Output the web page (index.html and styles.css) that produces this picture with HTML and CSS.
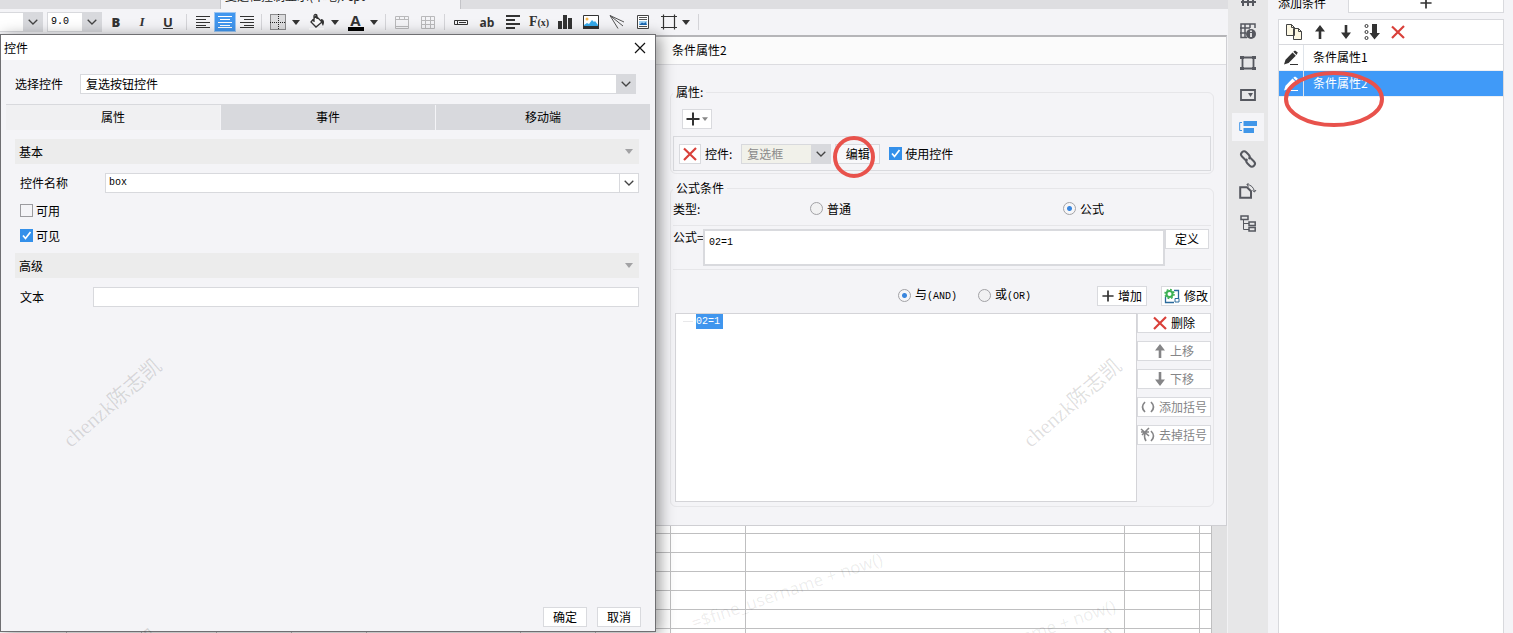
FILE: index.html
```html
<!DOCTYPE html>
<html lang="zh-CN">
<head>
<meta charset="utf-8">
<title>控件</title>
<link rel="stylesheet" href="styles.css">
</head>
<body>
<svg class="defs" aria-hidden="true">
  <symbol id="chev" viewBox="0 0 10 6"><path d="M.7 .7 5 5 9.3 .7" fill="none" stroke="#444" stroke-width="1.3"/></symbol>
  <symbol id="tri" viewBox="0 0 8 5"><path d="M0 0h8L4 5z" fill="currentColor"/></symbol>
  <symbol id="cross" viewBox="0 0 14 14"><path d="M1 1.500 13 13M13 1 1 13" fill="none" stroke="#d9403a" stroke-width="2.200"/></symbol>
  <symbol id="up" viewBox="0 0 12 14"><path d="M6 0 11 6.500H7.300V14H4.700V6.500H1z" fill="currentColor"/></symbol>
  <symbol id="down" viewBox="0 0 12 14"><path d="M6 14 11 7.500H7.300V0H4.700V7.500H1z" fill="currentColor"/></symbol>
  <symbol id="plus" viewBox="0 0 14 14"><path d="M7 .5v13M.5 7h13" stroke="#333" stroke-width="2"/></symbol>
  <symbol id="pencil" viewBox="0 0 16 16"><path d="M1 14.500 2.500 9.800 9.500 2.600 12.800 5.800 5.600 13zM10.300 1.800 12 .4 14.800 2.600 13.500 5z" fill="currentColor"/><path d="M7 14.500h8" stroke="currentColor"/></symbol>
</svg>

<main class="workspace">
  <div class="doc-tabs"><div class="doc-tab">复选框控制显示(本地). cpt *</div></div>
  <div class="toolbar">
    <span class="pick font-pick"><select aria-label="字体"><option></option></select><span class="arrow"><svg width="10" height="6"><use href="#chev"/></svg></span></span>
    <span class="pick size-pick"><select class="mono" aria-label="字号"><option>9.0</option></select><span class="arrow"><svg width="10" height="6"><use href="#chev"/></svg></span></span>
    <button class="tool letter" aria-label="粗体"><b>B</b></button>
    <button class="tool letter italic" aria-label="斜体"><i>I</i></button>
    <button class="tool letter" aria-label="下划线"><u>U</u></button>
    <i class="sep"></i>
    <button class="tool align" aria-label="左对齐"><svg width="14" height="12"><path d="M0 .5h14M0 3.500h10M0 6.500h14M0 9.500h10M0 11.500h14" stroke="#333"/></svg></button>
    <button class="tool align on" aria-label="居中"><svg width="14" height="12"><path d="M0 .5h14M2 3.500h10M0 6.500h14M2 9.500h10M0 11.500h14" stroke="#fff"/></svg></button>
    <button class="tool align" aria-label="右对齐"><svg width="14" height="12"><path d="M0 .5h14M4 3.500h10M0 6.500h14M4 9.500h10M0 11.500h14" stroke="#333"/></svg></button>
    <i class="sep"></i>
    <button class="tool drop" aria-label="边框"><svg width="16" height="16"><path d="M1 1h14v14H1z" fill="#dcdcde"/><path d="M.5 .5h15v15H.5zM8.500 0v16M0 8.500h16" fill="none" stroke="#222" stroke-dasharray="1 1"/></svg><svg class="caret" width="8" height="5"><use href="#tri"/></svg></button>
    <button class="tool drop" aria-label="填充"><svg width="16" height="16"><path d="M7 2 13 8 7 13 2 8zM5 8V2c0-2 3-2 3 0v3" fill="#fafafa" stroke="#333" stroke-width="1.300"/><path d="M12 5c3 0 4 3 2 7-1-1-1-3-2-4z" fill="#333"/><path d="M0 14h15v2H0z" fill="#fff"/></svg><svg class="caret" width="8" height="5"><use href="#tri"/></svg></button>
    <button class="tool drop" aria-label="字体颜色"><span class="color-letter">A</span><svg class="caret" width="8" height="5"><use href="#tri"/></svg></button>
    <i class="sep"></i>
    <button class="tool" aria-label="合并"><svg width="14" height="13"><path d="M.5 .5h13v12H.5zM0 3.500h14M0 10.500h14M4.500 0v3M9.500 0v3" fill="none" stroke="#b9b9bb"/></svg></button>
    <button class="tool" aria-label="拆分"><svg width="14" height="13"><path d="M.5 .5h13v12H.5zM0 4.500h14M0 8.500h14M4.500 0v13M9.500 0v13" fill="none" stroke="#b9b9bb"/></svg></button>
    <i class="sep"></i>
    <button class="tool" aria-label="文本框"><svg width="14" height="5"><path d="M.5 .5h13v4H.5zM3.500 0v5M5 2.500h7" fill="none" stroke="#333"/></svg></button>
    <button class="tool word" aria-label="文字">ab</button>
    <button class="tool" aria-label="段落"><svg width="14" height="14"><path d="M0 1h14M0 5h9M0 9h14M0 13h9" stroke="#333" stroke-width="2"/></svg></button>
    <button class="tool formula" aria-label="函数">F<small>(x)</small></button>
    <button class="tool" aria-label="图表"><svg width="14" height="14"><path d="M0 6h4v8H0zM5 0h4v14H5zM10 3h4v11h-4z" fill="#333"/></svg></button>
    <button class="tool" aria-label="图片"><svg width="16" height="14"><path d="M.5 .5h15v13H.5z" fill="#fff" stroke="#333"/><circle cx="4" cy="4" r="1.500" fill="#f5b54b"/><path d="M1 10 4 8l2 1 3-4 2 2 1-1 3 4v1H1z" fill="#35a9ea"/><path d="M0 11h16v3H0z" fill="#333"/></svg></button>
    <button class="tool" aria-label="斜线"><svg width="14" height="14"><path d="M14 7 0 .5 8 13.500M0 .5 13 11" fill="none" stroke="#555"/></svg></button>
    <button class="tool" aria-label="报表块"><svg width="12" height="14"><path d="M.5 .5h11v13H.5z" fill="#fff" stroke="#444"/><path d="M2 2.500h8M2 4.500h8M2 11.500h8" stroke="#555"/><path d="M2 6h8v4H2z" fill="#9ed2f4"/><path d="M2 10 5 7.500l2 1L8.500 7 10 10z" fill="#1a66b0"/></svg></button>
    <button class="tool" aria-label="悬浮元素"><svg width="16" height="16"><path d="M2.500 .5v15M13.500 .5v15M0 2.500h16M0 13.500h16" stroke="#333" stroke-width="1.200"/></svg></button>
    <svg class="caret" width="8" height="5"><use href="#tri"/></svg>
    <i class="sep end"></i>
  </div>
  <div class="canvas">
    <div class="sheet">
      <i class="first"></i><i></i><i></i><i></i><i></i><i class="double"></i><i></i><i></i><i></i><i class="wide"></i><i></i><i class="last"></i>
    </div>
    <div class="scroll"></div>
  </div>

  <section class="window conditions">
    <h2>条件属性2</h2>
    <div class="cond-body">
      <fieldset>
        <legend>属性:</legend>
        <button class="btn add-attr" aria-label="添加属性"><svg width="14" height="14"><use href="#plus"/></svg><svg width="6" height="4"><use href="#tri"/></svg></button>
        <div class="attr-row">
          <button class="btn kill" aria-label="删除属性"><svg width="14" height="14"><use href="#cross"/></svg></button>
          <label for="kind">控件:</label>
          <span class="pick kind-pick"><select id="kind" disabled><option>复选框</option></select><span class="arrow"><svg width="10" height="6"><use href="#chev"/></svg></span></span>
          <span class="edit-wrap"><button class="btn edit">编辑</button><svg class="ring" width="42" height="42"><circle cx="21" cy="21" r="19" fill="none" stroke="#e8524c" stroke-width="4"/></svg></span>
          <label class="check"><input type="checkbox" checked>使用控件</label>
        </div>
      </fieldset>
      <fieldset class="formula-set">
        <legend>公式条件</legend>
        <div class="type-row"><span>类型:</span><label class="radio"><input type="radio" name="type">普通</label><label class="radio"><input type="radio" name="type" checked>公式</label></div>
        <div class="expr-row"><label for="expr">公式=</label><textarea id="expr" class="mono">02=1</textarea><button class="btn define">定义</button></div>
        <div class="join-row">
          <label class="radio"><input type="radio" name="join" checked><span>与<span class="mono">(AND)</span></span></label>
          <label class="radio"><input type="radio" name="join"><span>或<span class="mono">(OR)</span></span></label>
          <button class="btn insert"><svg width="12" height="12" viewBox="0 0 14 14"><use href="#plus"/></svg>增加</button>
          <button class="btn modify"><svg width="16" height="14"><path d="M1.500 8v5.500H10M10 1.500h4.500V9" fill="none" stroke="#2a6a9c" stroke-width="1.300"/><path d="M11 9.500h4V13h-4z" fill="#fff" stroke="#2a6a9c"/><circle cx="5.500" cy="5" r="3" fill="none" stroke="#3cb054" stroke-width="2"/><circle cx="5.500" cy="5" r="4.500" fill="none" stroke="#3cb054" stroke-width="1.500" stroke-dasharray="1.800 1.734"/></svg>修改</button>
        </div>
        <div class="tree-row">
          <div class="tree mono"><span>02=1</span></div>
          <div class="actions">
            <button class="btn"><svg width="14" height="14"><use href="#cross"/></svg>删除</button>
            <button class="btn" disabled><svg width="12" height="14"><use href="#up"/></svg>上移</button>
            <button class="btn" disabled><svg width="12" height="14"><use href="#down"/></svg>下移</button>
            <button class="btn" disabled><svg width="14" height="12"><path d="M4 1Q-1 6 4 11M10 1q5 5 0 10" fill="none" stroke="currentColor" stroke-width="1.700"/></svg>添加括号</button>
            <button class="btn" disabled><svg width="14" height="14"><path d="M5 4Q2 8 5 13M10 3q5 5 0 10M0 1 8 8M8 0 1 7M0 4h8" fill="none" stroke="currentColor" stroke-width="1.600"/></svg>去掉括号</button>
          </div>
        </div>
      </fieldset>
    </div>
  </section>

  <section class="window control">
    <header><h2>控件</h2><button class="close" aria-label="关闭"><svg width="12" height="12"><path d="M1 1l10 10M11 1 1 11" stroke="#111" stroke-width="1.200"/></svg></button></header>
    <div class="choose"><label for="widget">选择控件</label><span class="pick"><select id="widget"><option>复选按钮控件</option></select><span class="arrow"><svg width="10" height="6"><use href="#chev"/></svg></span></span></div>
    <div class="tabs"><button class="active">属性</button><button>事件</button><button>移动端</button></div>
    <div class="props">
      <button class="group">基本<svg width="8" height="5"><use href="#tri"/></svg></button>
      <div class="field name-field"><label for="name">控件名称</label><span class="pick light"><input id="name" class="mono" value="box"><span class="arrow"><svg width="10" height="6"><use href="#chev"/></svg></span></span></div>
      <label class="check"><input type="checkbox">可用</label>
      <label class="check"><input type="checkbox" checked>可见</label>
      <button class="group">高级<svg width="8" height="5"><use href="#tri"/></svg></button>
      <div class="field text-field"><label for="text">文本</label><input id="text" class="text"></div>
    </div>
    <footer><button class="btn">确定</button><button class="btn">取消</button></footer>
  </section>
</main>

<nav class="rail">
  <button aria-label="单元格"><svg width="16" height="16"><path d="M1 11h15M1 6h15M3 1v14M8 1v14M13 1v14" stroke="#56585f" stroke-width="2"/></svg></button>
  <button aria-label="单元格属性"><svg width="16" height="16"><path d="M7 14.500H1V1h14v4M0 5h10M0 10h6M5 1v13M10 1v4" fill="none" stroke="#56585f" stroke-width="1.500"/><circle cx="11" cy="11" r="5" fill="#56585f"/><path d="M11 7.500v1.600M11 10v4" stroke="#fff" stroke-width="1.600"/></svg></button>
  <button aria-label="悬浮元素"><svg width="16" height="16"><path d="M2.500 2.500h11v11h-11z" fill="none" stroke="#56585f" stroke-width="1.800"/><path d="M0 1h4v3H0zM12 1h4v3h-4zM0 12h4v3H0zM12 12h4v3h-4z" fill="#56585f"/></svg></button>
  <button aria-label="控件设置"><svg width="16" height="12"><path d="M1 1h14v10H1z" fill="none" stroke="#56585f" stroke-width="1.800"/><path d="M8 4h5l-2.500 4z" fill="#56585f"/></svg></button>
  <button class="on" aria-label="条件属性"><svg width="18" height="14"><path d="M3 2.500H.7v8H3" fill="none" stroke="#4096e8"/><path d="M4.500 1h13.500v5H4.500zM4.500 8H15v5H4.500z" fill="#4096e8"/></svg></button>
  <button aria-label="超级链接"><svg width="16" height="16" viewBox="0 0 16 16"><g fill="none" stroke="#56585f" stroke-width="2" transform="rotate(45 8 8)"><path d="M8 10.500H2a3 3 0 0 1 0-6h3.500a3 3 0 0 1 3 3"/><path d="M8 5.500h6a3 3 0 0 1 0 6h-3.500a3 3 0 0 1-3-3"/></g></svg></button>
  <button aria-label="组件"><svg width="18" height="16"><path d="M1.200 4.200H8l4 4v6.600H1.200z" fill="none" stroke="#56585f" stroke-width="2"/><path d="M8 1.500q6 .5 7.500 7M9.500 0 8 1.500 9.500 3.500M13.500 7.500l2 1.500 1.500-2" fill="none" stroke="#56585f"/></svg></button>
  <button aria-label="结构树"><svg width="16" height="17"><path d="M1 1h7v3.500H1zM9 7h6.200v3.500H9zM9 12.500h6.200V16H9z" fill="none" stroke="#56585f" stroke-width="1.500"/><path d="M3.500 5v9.500H9M3.500 8.500H9" fill="none" stroke="#56585f"/></svg></button>
</nav>

<aside class="side">
  <div class="side-head"><span>添加条件</span><button class="btn" aria-label="添加"><svg width="12" height="12" viewBox="0 0 14 14"><use href="#plus"/></svg></button></div>
  <div class="list">
    <div class="list-tools">
      <button aria-label="复制"><svg width="17" height="16"><path d="M.5 .5h5l3 3v8h-8zM7.500 4.500h5l3 3v8h-8z" fill="#fdf8e3" stroke="#444"/><path d="M5.500 .5v3h3M12.500 4.500v3h3" fill="none" stroke="#444"/></svg></button>
      <button aria-label="上移"><svg width="12" height="14"><use href="#up"/></svg></button>
      <button aria-label="下移"><svg width="12" height="14"><use href="#down"/></svg></button>
      <button aria-label="排序"><svg width="16" height="16"><circle cx="2.500" cy="2" r="1.500" fill="none" stroke="#333"/><circle cx="2.500" cy="8" r="1.500" fill="none" stroke="#333"/><circle cx="2.500" cy="14" r="1.500" fill="none" stroke="#333"/><path d="M8 0h5v9h3l-5.500 6.500L5.500 9H8z" fill="#333"/></svg></button>
      <button aria-label="删除"><svg width="14" height="14"><use href="#cross"/></svg></button>
    </div>
    <div class="item"><span class="pen"><svg width="16" height="16"><use href="#pencil"/></svg></span><span class="name">条件属性1</span></div>
    <div class="item on"><span class="pen"><svg width="16" height="16"><use href="#pencil"/></svg></span><span class="name">条件属性2</span><svg class="oval" width="102" height="56"><ellipse cx="51" cy="28" rx="48" ry="26" fill="none" stroke="#e8524c" stroke-width="4"/></svg></div>
  </div>
</aside>

<div class="marks" aria-hidden="true">
  <span class="mark m1">chenzk陈志凯</span>
  <span class="mark m2">chenzk陈志凯</span>
  <span class="mark m3">chenzk陈志凯</span>
  <span class="mark m4">chenzk陈志凯</span>
  <span class="mark stamp s1">=$fine_username + now()</span>
  <span class="mark stamp s2">=$fine_username + now()</span>
</div>
</body>
</html>
```
FILE: styles.css
```css
* { box-sizing: border-box; }
body {
  margin: 0;
  height: 100vh;
  display: flex;
  overflow: hidden;
  background: #f4f4f7;
  color: #000;
  font: 12px/16px "Noto Sans CJK SC", sans-serif;
}
button, input, select, textarea { font: inherit; color: inherit; margin: 0; padding: 0; border: 0; background: none; border-radius: 0; }
h2 { margin: 0; font: inherit; }
svg { flex: none; display: block; overflow: visible; }
.defs { position: absolute; width: 0; height: 0; }
.mono { font-family: "Liberation Mono", "Noto Sans CJK SC", monospace; font-size: 10px; }

.workspace { position: relative; flex: 1; min-width: 0; display: flex; flex-direction: column; }
.doc-tabs { height: 9px; flex: none; display: flex; align-items: flex-end; overflow: hidden; background: #dedee1; padding-left: 220px; }
.doc-tab { flex: none; width: 241px; padding: 0 4px 5px; background: #f4f4f7; border-right: 1px solid #c4c4c8; border-left: 1px solid #c4c4c8; color: #222; }
.toolbar { height: 26px; flex: none; display: flex; align-items: center; background: #f4f4f7; }
.tool { width: 26px; height: 20px; display: flex; align-items: center; justify-content: center; color: #333; }
.letter { font: 700 13px "Open Sans", sans-serif; }
.italic { font-family: "Liberation Serif", serif; }
.word { font: 700 12px "Open Sans", sans-serif; }
.formula { font: 700 14px "Liberation Serif", serif; }
.formula small { font-size: 10px; }
.align { width: 22px; }
.align.on { background: #4096ee; border: 1px solid #9cc6f2; }
.drop { width: 39px; gap: 6px; }
.caret { color: #333; }
.color-letter { width: 16px; height: 17px; border-bottom: 4px solid #000; font: 700 15px/13px "Open Sans", sans-serif; text-align: center; }
.sep { width: 1px; height: 16px; margin: 0 3px; background: #d4d4d8; }
.letter + .sep { margin: 0 5px; }
.sep.end { margin-left: 8px; }

.pick { display: flex; height: 20px; border: 1px solid #d8d9dd; background: #fff; }
.pick select, .pick input { flex: 1; min-width: 0; padding-left: 5px; appearance: none; outline: 0; }
.arrow { width: 19px; flex: none; display: flex; align-items: center; justify-content: center; background: #d8d9dd; }
.light .arrow { background: #fff; border-left: 1px solid #d8d9dd; }
.font-pick { width: 43px; border-left: 0; }
.size-pick { width: 55px; margin: 0 1px 0 4px; }
.size-pick select { padding-left: 3px; }

.canvas { flex: 1; display: flex; background: #fff; }
.sheet { flex: 1; display: flex; background: repeating-linear-gradient(#fff 0 18px, #bfbfc0 18px 19px) 0 5px; }
.sheet i { width: 75px; flex: none; border-right: 1px solid #bfbfc0; }
.sheet .first { width: 67px; }
.sheet .double { width: 154px; }
.sheet .wide { flex: 1; }
.sheet .last { width: 12px; }
.scroll { width: 16px; background: #e1e1e2; border-right: 1px solid #f2f2f4; }

.window { position: absolute; background: #f4f4f7; display: flex; flex-direction: column; }
.btn { height: 20px; flex: none; display: flex; align-items: center; justify-content: center; gap: 4px; background: #fff; border: 1px solid #d9dade; white-space: nowrap; }
.btn:disabled { color: #858587; }

.conditions { left: 655px; right: 1px; top: 35px; height: 491px; border: 1px solid #cfcfd3; border-top: 2px solid #b5b5b8; }
.conditions h2 { flex: none; height: 28px; padding: 5px 16px; background: #fbfbfb; border-bottom: 1px solid #dcdce0; }
.cond-body { flex: 1; display: flex; flex-direction: column; gap: 6px; padding: 19px 12px 18px 14px; }
fieldset { min-width: 0; margin: 0; padding: 9px 2px 2px; border: 1px solid #e6e6e9; border-radius: 6px; }
legend { padding: 0 3px; height: 16px; }
.add-attr { width: 30px; margin-left: 9px; gap: 2px; color: #888; }
.attr-row { height: 35px; margin-top: 7px; padding: 0 5px; display: flex; align-items: center; border: 1px solid #d9dade; }
.kill { width: 22px; margin-right: 4px; }
.kind-pick { width: 90px; margin: 0 4px 0 9px; background: #f1f1ea; }
.kind-pick select { color: #8a8a8a; opacity: 1; }
.edit-wrap { position: relative; }
.edit { width: 45px; background: #f8f8fa; }
.ring { position: absolute; left: -2px; top: -8px; }
.check { display: flex; align-items: center; gap: 3px; }
.attr-row .check { margin-left: 9px; }
input[type=checkbox] { appearance: none; width: 13px; height: 13px; border: 1px solid #9b9b9f; }
input[type=checkbox]:checked { border: 0; background: #3490ea url("data:image/svg+xml,%3Csvg xmlns='http://www.w3.org/2000/svg' width='13' height='13'%3E%3Cpath d='M3 6.500 5.500 9.500 10.500 3' fill='none' stroke='white' stroke-width='1.700'/%3E%3C/svg%3E"); }
.radio { display: flex; align-items: center; gap: 4px; }
input[type=radio] { appearance: none; width: 13px; height: 13px; border: 1px solid #a2a2a6; border-radius: 50%; background: #f1f1f2; }
input[type=radio]:checked { background: radial-gradient(circle, #3a86dd 0 2px, #f6f6f8 3px); }

.formula-set { flex: 1; display: flex; flex-direction: column; padding-top: 0; }
.type-row { height: 30px; padding-bottom: 4px; display: grid; grid-template-columns: 137px 253px 1fr; align-items: center; border-bottom: 1px solid #e6e6e9; }
.expr-row { height: 44px; padding: 3px 2px 0 0; display: flex; align-items: flex-start; border-bottom: 1px solid #e6e6e9; }
.expr-row label { width: 30px; white-space: nowrap; }
textarea { flex: 1; height: 37px; padding: 4px; border: 2px solid #d9dade; background: #fff; resize: none; outline: 0; display: block; }
.define { width: 44px; }
.join-row { height: 43px; padding: 8px 0 0 225px; display: flex; align-items: center; }
.join-row .radio + .radio { margin-left: 21px; }
.insert { width: 50px; margin-left: auto; margin-right: 14px; }
.modify { width: 50px; }
.tree-row { flex: 1; display: flex; margin: 0 0 2px 2px; }
.tree { flex: 1; border: 1px solid #d4d4d8; background: #fff; display: flex; align-items: flex-start; }
.tree::before { content: ""; width: 10px; margin: 7px 3px 0 7px; border-top: 1px solid #e8e8ea; }
.tree span { padding-right: 3px; height: 15px; line-height: 15px; background: #4096ee; color: #fff; }
.actions { width: 74px; display: flex; flex-direction: column; gap: 8px; }

.control { left: 0; top: 34px; width: 656px; bottom: 1px; border: 1px solid #6f6f72; box-shadow: 4px 2px 14px rgba(0, 0, 0, .4); }
.control header { height: 25px; display: flex; align-items: center; justify-content: space-between; padding: 0 9px 0 3px; background: #fff; }
.choose { display: flex; align-items: center; gap: 17px; margin: 14px 19px 10px 14px; }
.choose .pick { flex: 1; }
.tabs { display: flex; gap: 1px; margin: 0 5px; border-top: 1px solid #d8d9dd; }
.tabs button { flex: 1; height: 25px; padding-bottom: 2px; background: #d8d9dd; }
.tabs .active { background: #f0f0f2; }
.props { display: flex; flex-direction: column; padding: 9px 16px 0 14px; }
.group { height: 25px; padding: 0 6px 0 4px; display: flex; align-items: center; justify-content: space-between; background: #ececec; }
.group svg { color: #a2a2a4; }
.field { height: 20px; margin: 9px 0 5px; padding-left: 5px; display: flex; align-items: center; }
.name-field label { width: 85px; }
.text-field label { width: 73px; }
.field .pick { flex: 1; }
.field .pick input { padding-left: 3px; }
.text { flex: 1; height: 20px; border: 1px solid #d8d9dd; background: #fff; }
.props .check { height: 25px; padding-left: 5px; }
.props .check + .group { margin-top: 5px; }
.control footer { margin-top: auto; padding: 0 14px 4px; display: flex; justify-content: flex-end; gap: 10px; }
.control footer .btn { width: 44px; }

.rail { width: 40px; flex: none; margin-top: -15px; display: flex; flex-direction: column; gap: 4px; align-items: center; background: #e7e7e8; }
.rail button { width: 32px; height: 28px; flex: none; display: flex; align-items: center; justify-content: center; }
.rail .on { background: #f4f4f7; }

.side { width: 245px; flex: none; padding: 0 9px 0 10px; display: flex; flex-direction: column; }
.side-head { height: 19px; flex: none; display: flex; justify-content: space-between; }
.side-head span { margin-top: -5px; }
.side-head .btn { width: 156px; margin-top: -7px; }
.list { flex: 1; border: 1px solid #d8d9dd; border-bottom: 0; background: #fff; }
.list-tools { height: 25px; display: flex; align-items: center; border-bottom: 1px solid #d8d9dd; padding-left: 2px; }
.list-tools button { width: 26px; display: flex; justify-content: center; color: #333; }
.item { position: relative; height: 26px; display: flex; border-bottom: 1px solid #eef0f4; }
.pen { width: 25px; display: flex; align-items: center; justify-content: center; border-right: 1px solid #dfe4ea; color: #333; }
.name { padding: 4px 9px; }
.item.on { background: #409af8; color: #fff; }
.item.on .pen { color: #fff; }
.oval { position: absolute; left: 4px; top: 0; }

.marks { position: absolute; inset: 0; overflow: hidden; pointer-events: none; }
.mark { position: absolute; transform: rotate(-41deg); transform-origin: 0 100%; font: 21px/24px "Liberation Serif", "Noto Sans CJK SC", serif; color: rgba(0, 0, 0, .13); white-space: nowrap; }
.m1 { left: 74px; top: 428px; }
.m2 { left: 1034px; top: 428px; }
.m3 { left: 72px; top: 698px; }
.m4 { left: 1032px; top: 698px; }
.stamp { transform: rotate(-19deg); font: 17px/24px "Noto Sans", sans-serif; color: rgba(0, 0, 0, .08); }
.s1 { left: 696px; top: 611px; }
.s2 { left: 929px; top: 658px; }
```
